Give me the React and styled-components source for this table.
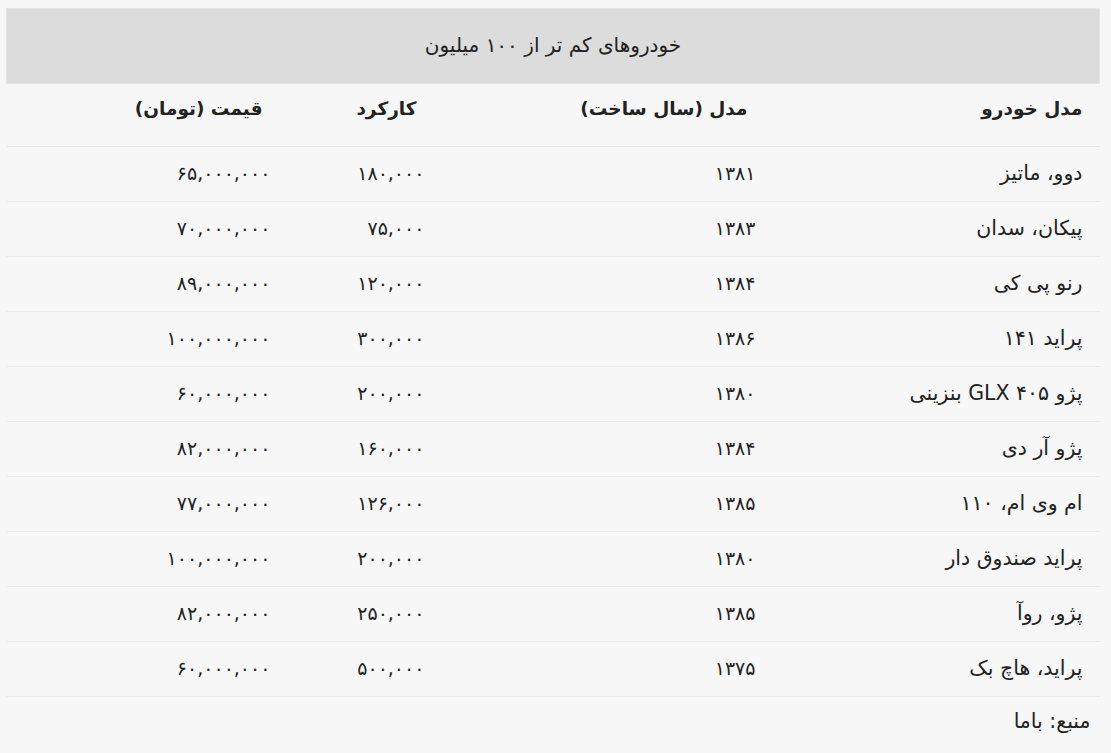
import React from "react";
import styled, { createGlobalStyle } from "styled-components";

const Global = createGlobalStyle`
  html, body { margin: 0; padding: 0; background: #f7f7f7; }
  body { font-family: "DejaVu Sans", "Noto Sans", sans-serif; color: #222; }
`;

const Page = styled.div`
  direction: rtl;
  padding: 8px 11px 0 7px;
  background: #f7f7f7;
  min-height: 753px;
  box-sizing: border-box;
`;

const Table = styled.table`
  width: 100%;
  border-collapse: collapse;
  table-layout: fixed;
`;

const Caption = styled.th`
  background: #dcdcdc;
  border: 1px solid #e4e4e4;
  height: 75px;
  box-sizing: border-box;
  font-weight: normal;
  font-size: 20px;
  text-align: center;
  color: #222;
  padding: 0 0 3px 0;
`;

const Head = styled.th`
  height: 63px;
  box-sizing: border-box;
  font-weight: bold;
  font-size: 18.5px;
  text-align: right;
  padding: 0 ${(p) => p.$inset}px 14px 0;
  border-bottom: 1px solid #e6e6e6;
  color: #222;
`;

const Cell = styled.td`
  height: 55px;
  box-sizing: border-box;
  font-size: ${(p) => (p.$num ? 19 : 20.5)}px;
  text-align: right;
  padding: 0 17px 2px 0;
  border-bottom: 1px solid #e9e9e9;
  color: #222;
  white-space: nowrap;
`;

const Source = styled.td`
  height: 48px;
  font-size: 20.5px;
  text-align: right;
  padding: 0 9px 0 0;
  color: #222;
`;

const cols = [327, 331, 154, 281];

const rows = [
  ["دوو، ماتیز", "۱۳۸۱", "۱۸۰,۰۰۰", "۶۵,۰۰۰,۰۰۰"],
  ["پیکان، سدان", "۱۳۸۳", "۷۵,۰۰۰", "۷۰,۰۰۰,۰۰۰"],
  ["رنو پی کی", "۱۳۸۴", "۱۲۰,۰۰۰", "۸۹,۰۰۰,۰۰۰"],
  ["پراید ۱۴۱", "۱۳۸۶", "۳۰۰,۰۰۰", "۱۰۰,۰۰۰,۰۰۰"],
  ["پژو GLX ۴۰۵ بنزینی", "۱۳۸۰", "۲۰۰,۰۰۰", "۶۰,۰۰۰,۰۰۰"],
  ["پژو آر دی", "۱۳۸۴", "۱۶۰,۰۰۰", "۸۲,۰۰۰,۰۰۰"],
  ["ام وی ام، ۱۱۰", "۱۳۸۵", "۱۲۶,۰۰۰", "۷۷,۰۰۰,۰۰۰"],
  ["پراید صندوق دار", "۱۳۸۰", "۲۰۰,۰۰۰", "۱۰۰,۰۰۰,۰۰۰"],
  ["پژو، روآ", "۱۳۸۵", "۲۵۰,۰۰۰", "۸۲,۰۰۰,۰۰۰"],
  ["پراید، هاچ بک", "۱۳۷۵", "۵۰۰,۰۰۰", "۶۰,۰۰۰,۰۰۰"],
];

const headers = ["مدل خودرو", "مدل (سال ساخت)", "کارکرد", "قیمت (تومان)"];

export default function App() {
  return (
    <>
      <Global />
      <Page>
        <Table>
          <colgroup>
            {cols.map((w, i) => (
              <col key={i} style={{ width: w }} />
            ))}
          </colgroup>
          <thead>
            <tr>
              <Caption colSpan={4}>خودروهای کم تر از ۱۰۰ میلیون</Caption>
            </tr>
            <tr>
              {headers.map((h, i) => (
                <Head key={i} $inset={i === 0 ? 17 : 25}>
                  {h}
                </Head>
              ))}
            </tr>
          </thead>
          <tbody>
            {rows.map((r, i) => (
              <tr key={i}>
                {r.map((c, j) => (
                  <Cell key={j} $num={j > 0}>
                    {c}
                  </Cell>
                ))}
              </tr>
            ))}
            <tr>
              <Source colSpan={4}>منبع: باما</Source>
            </tr>
          </tbody>
        </Table>
      </Page>
    </>
  );
}
